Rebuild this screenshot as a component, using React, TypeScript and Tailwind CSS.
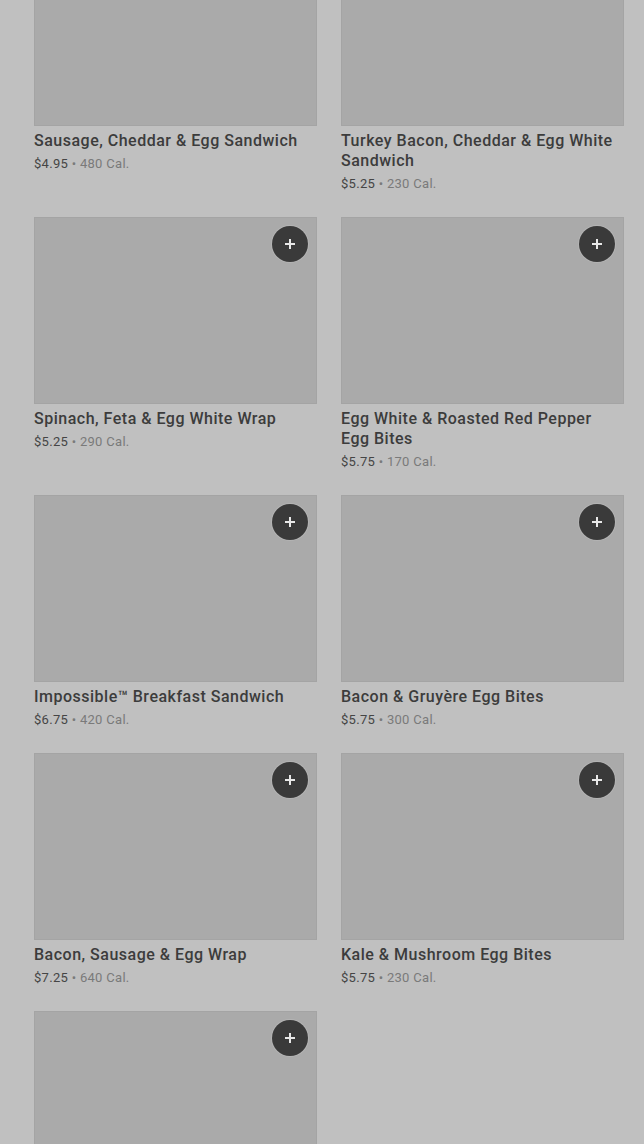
const items = [
  { name: 'Sausage, Cheddar & Egg Sandwich', price: '$4.95', cal: '480 Cal.' },
  { name: 'Turkey Bacon, Cheddar & Egg White Sandwich', price: '$5.25', cal: '230 Cal.' },
  { name: 'Spinach, Feta & Egg White Wrap', price: '$5.25', cal: '290 Cal.' },
  { name: 'Egg White & Roasted Red Pepper Egg Bites', price: '$5.75', cal: '170 Cal.' },
  { name: 'Impossible™ Breakfast Sandwich', price: '$6.75', cal: '420 Cal.' },
  { name: 'Bacon & Gruyère Egg Bites', price: '$5.75', cal: '300 Cal.' },
  { name: 'Bacon, Sausage & Egg Wrap', price: '$7.25', cal: '640 Cal.' },
  { name: 'Kale & Mushroom Egg Bites', price: '$5.75', cal: '230 Cal.' },
];

function PlusButton() {
  return (
    <button className="absolute top-2 right-2 w-9 h-9 rounded-full bg-[#3a3a3a] ring-1 ring-[#b4b4b4] flex items-center justify-center">
      <svg width="12" height="12" viewBox="0 0 12 12" fill="none">
        <path d="M6 1v10M1 6h10" stroke="#e8e8e8" strokeWidth="2" />
      </svg>
    </button>
  );
}

function MenuImage() {
  return (
    <div className="relative h-[187px] bg-[#aaaaaa] border border-[#a4a4a4]">
      <PlusButton />
    </div>
  );
}

function MenuCard({ item }: { item: (typeof items)[number] }) {
  return (
    <div className="flex flex-col">
      <MenuImage />
      <div className="mt-[5px] text-[16px] leading-5 font-medium tracking-[0.5px] text-[#3c3c3c] pr-1">{item.name}</div>
      <div className="mt-[3px] text-[13px] leading-5 tracking-[0.3px] text-[#454545]">
        {item.price}
        <span className="text-[#7a7a7a]"> • {item.cal}</span>
      </div>
    </div>
  );
}

export default function App() {
  return (
    <div className="h-[1144px] overflow-hidden bg-[#c0c0c0]" style={{ fontFamily: 'Roboto, "Liberation Sans", sans-serif' }}>
      <div className="grid grid-cols-2 gap-x-6 gap-y-[23px] pl-[34px] pr-5 mt-[-61px]">
        {items.map((item) => (
          <MenuCard key={item.name} item={item} />
        ))}
        {/* next item, only its photo is in view */}
        <div className="flex flex-col">
          <MenuImage />
        </div>
      </div>
    </div>
  );
}
